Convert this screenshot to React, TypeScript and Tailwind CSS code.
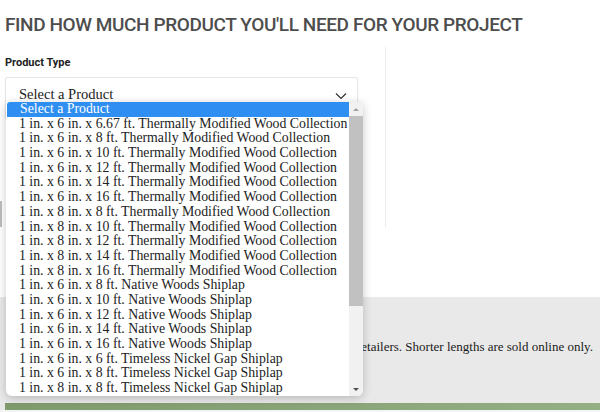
import React from "react";

const items = [
  "1 in. x 6 in. x 6.67 ft. Thermally Modified Wood Collection",
  "1 in. x 6 in. x 8 ft. Thermally Modified Wood Collection",
  "1 in. x 6 in. x 10 ft. Thermally Modified Wood Collection",
  "1 in. x 6 in. x 12 ft. Thermally Modified Wood Collection",
  "1 in. x 6 in. x 14 ft. Thermally Modified Wood Collection",
  "1 in. x 6 in. x 16 ft. Thermally Modified Wood Collection",
  "1 in. x 8 in. x 8 ft. Thermally Modified Wood Collection",
  "1 in. x 8 in. x 10 ft. Thermally Modified Wood Collection",
  "1 in. x 8 in. x 12 ft. Thermally Modified Wood Collection",
  "1 in. x 8 in. x 14 ft. Thermally Modified Wood Collection",
  "1 in. x 8 in. x 16 ft. Thermally Modified Wood Collection",
  "1 in. x 6 in. x 8 ft. Native Woods Shiplap",
  "1 in. x 6 in. x 10 ft. Native Woods Shiplap",
  "1 in. x 6 in. x 12 ft. Native Woods Shiplap",
  "1 in. x 6 in. x 14 ft. Native Woods Shiplap",
  "1 in. x 6 in. x 16 ft. Native Woods Shiplap",
  "1 in. x 6 in. x 6 ft. Timeless Nickel Gap Shiplap",
  "1 in. x 6 in. x 8 ft. Timeless Nickel Gap Shiplap",
  "1 in. x 8 in. x 8 ft. Timeless Nickel Gap Shiplap",
];

export default function App() {
  return (
    <div className="relative w-[600px] h-[412px] overflow-hidden bg-white flex flex-col">
      <h1 className="pl-[5px] pt-[12px] text-[19px] leading-[26px] font-medium text-[#4d4d4d] font-['Roboto',sans-serif] tracking-[-0.4px]">
        FIND HOW MUCH PRODUCT YOU'LL NEED FOR YOUR PROJECT
      </h1>
      <div className="flex h-[259px] pt-[16px]">
        <div className="w-[358px] pl-[5px] flex flex-col">
          <div className="text-[11px] font-bold text-[#222] font-['Roboto',sans-serif] leading-[14px] pt-[2px]">Product Type</div>
          <div className="mt-[7px] h-[42px] border border-[#e6e6e6] rounded-[2px] shadow-[0_1px_2px_rgba(0,0,0,0.05)] flex items-start justify-between pl-[13px] pr-[10px] pt-[6px]">
            <span className="text-[14.5px] text-[#222] font-['Liberation_Serif',serif]">Select a Product</span>
            <svg width="12" height="8" viewBox="0 0 12 8" className="mt-[8px]">
              <path d="M1 1.5 L6 6.5 L11 1.5" fill="none" stroke="#333" strokeWidth="1.2" />
            </svg>
          </div>
          <div className="mt-[82px] ml-[-5px] w-[2px] h-[26px] bg-[#bdbdbd]" />
        </div>
        <div className="ml-[27px] mt-[-7px] w-px h-[180px] bg-[#ececec]" />
      </div>
      <div className="flex-1 bg-[#e9e9e9] flex flex-col">
        <div className="flex-1 flex items-center justify-end pr-[7px] pb-[6px]">
          <span className="text-[13px] text-[#1a1a1a] font-['Liberation_Serif',serif]">retailers. Shorter lengths are sold online only.</span>
        </div>
        <div className="ml-[5px] h-[7px] bg-gradient-to-r from-[#7f9a6d] to-[#93af83]" />
        <div className="h-[2px] bg-[#f4f4f4]" />
      </div>

      <div className="absolute left-[6px] top-[102px] w-[357px] h-[294px] bg-white rounded-b-[6px] shadow-[0_2px_10px_rgba(0,0,0,0.22)] flex overflow-hidden">
        <div className="flex-1 flex flex-col pt-0 font-['Liberation_Serif',serif] text-[13.8px] text-[#222]">
          <div className="h-[14.7px] leading-[14.7px] bg-[#2f8ef2] text-white pl-[13px] ml-[1px] rounded-tl-[3px]">Select a Product</div>
          {items.map((t) => (
            <div key={t} className="h-[14.7px] leading-[14.7px] pl-[13px] whitespace-nowrap">
              {t}
            </div>
          ))}
        </div>
        <div className="w-[14px] bg-[#f1f1f1] flex flex-col items-center">
          <div className="h-[14px] w-full flex items-center justify-center">
            <div className="w-0 h-0 border-l-[3px] border-r-[3px] border-b-[3px] border-l-transparent border-r-transparent border-b-[#a3a3a3]" />
          </div>
          <div className="w-full h-[190px] bg-[#c1c1c1]" />
          <div className="flex-1" />
          <div className="h-[14px] w-full flex items-center justify-center">
            <div className="w-0 h-0 border-l-[3px] border-r-[3px] border-t-[3px] border-l-transparent border-r-transparent border-t-[#505050]" />
          </div>
        </div>
      </div>
    </div>
  );
}
